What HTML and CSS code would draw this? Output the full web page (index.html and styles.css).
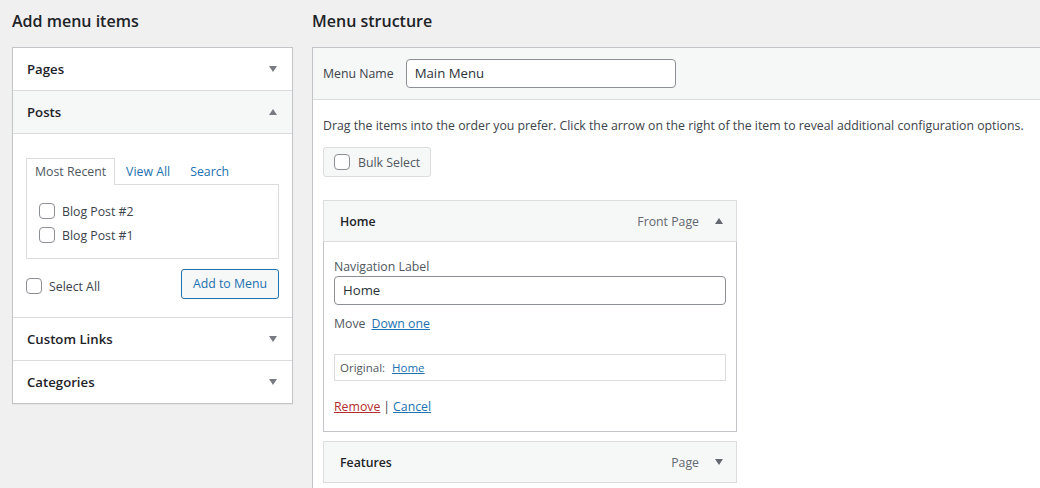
FILE: index.html
```html
<!DOCTYPE html>
<html>
<head>
<meta charset="utf-8">
<link rel="stylesheet" href="styles.css">
</head>
<body>
<div class="page">
  <div class="col-left">
    <h2 class="col-title">Add menu items</h2>
    <div class="accordion">
      <div class="acc-head"><span>Pages</span><span class="tri down"></span></div>
      <div class="acc-head open"><span>Posts</span><span class="tri up"></span></div>
      <div class="acc-content">
        <div class="tabs">
          <span class="tab active">Most Recent</span>
          <span class="tab">View All</span>
          <span class="tab">Search</span>
        </div>
        <div class="tab-panel">
          <label class="check"><span class="box"></span>Blog Post #2</label>
          <label class="check"><span class="box"></span>Blog Post #1</label>
        </div>
        <div class="actions">
          <label class="check"><span class="box"></span>Select All</label>
          <span class="btn-primary-out">Add to Menu</span>
        </div>
      </div>
      <div class="acc-head"><span>Custom Links</span><span class="tri down"></span></div>
      <div class="acc-head last"><span>Categories</span><span class="tri down"></span></div>
    </div>
  </div>
  <div class="col-right">
    <h2 class="col-title">Menu structure</h2>
    <div class="menu-box">
      <div class="menu-head">
        <span class="lbl">Menu Name</span>
        <span class="input name-input">Main Menu</span>
      </div>
      <div class="menu-body">
        <p class="desc">Drag the items into the order you prefer. Click the arrow on the right of the item to reveal additional configuration options.</p>
        <span class="btn-bulk"><span class="box"></span>Bulk Select</span>
        <div class="item">
          <div class="item-bar"><span class="item-title">Home</span><span class="item-type">Front Page</span><span class="tri up dark"></span></div>
          <div class="item-settings">
            <div class="field-label">Navigation Label</div>
            <div class="input wide">Home</div>
            <div class="move">Move<a class="link">Down one</a></div>
            <div class="original">Original:<a class="link">Home</a></div>
            <div class="item-actions"><a class="link red">Remove</a><span class="sep">|</span><a class="link">Cancel</a></div>
          </div>
        </div>
        <div class="item">
          <div class="item-bar"><span class="item-title">Features</span><span class="item-type">Page</span><span class="tri down dark"></span></div>
        </div>
      </div>
    </div>
  </div>
</div>
</body>
</html>
```

FILE: styles.css
```css
html, body {
  margin: 0;
  padding: 0;
  background: #f0f0f1;
  overflow: hidden;
  width: 1040px;
  height: 488px;
}
body {
  font-family: "Open Sans", "Noto Sans", sans-serif;
  font-size: 12.3px;
  color: #3c434a;
}
.page {
  display: grid;
  grid-template-columns: 281px 740px;
  column-gap: 19px;
  padding-left: 12px;
}
.col-title {
  margin: 0;
  padding-top: 9px;
  height: 47px;
  box-sizing: border-box;
  font-size: 16px;
  font-weight: 600;
  line-height: 24px;
  color: #1d2327;
}
.accordion {
  background: #fff;
  border: 1px solid #c3c4c7;
  box-shadow: 0 1px 1px rgba(0,0,0,.04);
}
.acc-head {
  display: flex;
  justify-content: space-between;
  align-items: center;
  height: 43px;
  box-sizing: border-box;
  padding: 0 14px;
  border-bottom: 1px solid #dcdcde;
  font-size: 13.2px;
  font-weight: 600;
  color: #1d2327;
}
.acc-head.open { background: #f6f7f7; }
.acc-head.last { border-bottom: none; height: 42px; }
.tri {
  width: 0;
  height: 0;
  border-left: 4.5px solid transparent;
  border-right: 4.5px solid transparent;
  margin-right: 1px;
}
.tri.down { border-top: 6px solid #787c82; }
.tri.up { border-bottom: 6px solid #787c82; }
.tri.dark.down { border-top-color: #646970; }
.tri.dark.up { border-bottom-color: #646970; }
.acc-content {
  padding: 24px 13px 18px 13px;
  border-bottom: 1px solid #dcdcde;
}
.tabs {
  display: flex;
  gap: 2px;
  height: 27px;
  align-items: stretch;
  margin-bottom: -1px;
  position: relative;
}
.tab {
  padding: 0 8px;
  line-height: 26px;
  color: #2271b1;
  border: 1px solid transparent;
  border-bottom: none;
}
.tab.active {
  color: #50575e;
  border-color: #dcdcde;
  background: #fff;
  position: relative;
  z-index: 1;
  height: 27px;
  box-sizing: border-box;
}
.tab-panel {
  border: 1px solid #dcdcde;
  height: 75px;
  box-sizing: border-box;
  padding: 18px 12px 0;
  display: flex;
  flex-direction: column;
  gap: 8px;
}
.check {
  display: flex;
  align-items: center;
  gap: 7px;
  height: 16px;
  color: #3c434a;
}
.box {
  width: 16px;
  height: 16px;
  box-sizing: border-box;
  border: 1px solid #8c8f94;
  border-radius: 4px;
  background: #fff;
  flex: none;
}
.actions {
  display: flex;
  justify-content: space-between;
  align-items: center;
  margin-top: 10px;
}
.actions .check { margin-top: 4px; gap: 7px; }
.btn-primary-out {
  display: inline-block;
  height: 30px;
  box-sizing: border-box;
  width: 98px;
  text-align: center;
  line-height: 28px;
  border: 1px solid #2271b1;
  border-radius: 3px;
  background: #f6f7f7;
  color: #2271b1;
}
.menu-box {
  background: #fff;
  border: 1px solid #c3c4c7;
  border-right: none;
  height: 460px;
}
.menu-head {
  background: #f6f7f7;
  border-bottom: 1px solid #dcdcde;
  height: 52px;
  box-sizing: border-box;
  display: flex;
  align-items: center;
  padding: 0 10px;
  gap: 12px;
}
.lbl { color: #3c434a; }
.input {
  border: 1px solid #8c8f94;
  border-radius: 4px;
  background: #fff;
  box-sizing: border-box;
  font-size: 13.2px;
  color: #2c3338;
  padding: 0 8px;
}
.name-input {
  width: 270px;
  height: 29px;
  line-height: 27px;
}
.menu-body {
  padding: 0 10px;
}
.desc {
  margin: 16px 0 12px;
  line-height: 19px;
  white-space: nowrap;
}
.btn-bulk {
  display: inline-flex;
  align-items: center;
  gap: 8px;
  height: 30px;
  box-sizing: border-box;
  padding: 0 10px;
  white-space: nowrap;
  border: 1px solid #dcdcde;
  border-radius: 3px;
  background: #f6f7f7;
  color: #50575e;
}
.item {
  width: 414px;
  margin-top: 23px;
}
.item + .item { margin-top: 9px; }
.item-bar {
  display: flex;
  align-items: center;
  height: 42px;
  box-sizing: border-box;
  padding: 0 12px 0 16px;
  border: 1px solid #dcdcde;
  background: #f6f7f7;
}
.item-title {
  font-weight: 600;
  color: #1d2327;
  flex: 1;
}
.item-type {
  color: #646970;
  margin-right: 16px;
}
.item-settings {
  border: 1px solid #c3c4c7;
  border-top: none;
  padding: 15px 10px 18px;
  height: 190px;
  box-sizing: border-box;
}
.field-label {
  color: #50575e;
  line-height: 19px;
}
.input.wide {
  height: 29px;
  line-height: 27px;
}
.move {
  margin-top: 9px;
  line-height: 20px;
  color: #50575e;
}
.link {
  color: #2271b1;
  text-decoration: underline;
}
.move .link { margin-left: 6px; }
.link.red { color: #b32d2e; }
.original {
  margin-top: 20px;
  border: 1px solid #dcdcde;
  height: 27px;
  box-sizing: border-box;
  padding: 0 5px;
  line-height: 25px;
  font-size: 11.5px;
  color: #50575e;
}
.original .link { margin-left: 7px; }
.item-actions {
  margin-top: 16px;
  line-height: 20px;
}
.sep { color: #3c434a; margin: 0 3px 0 3px; }
```
